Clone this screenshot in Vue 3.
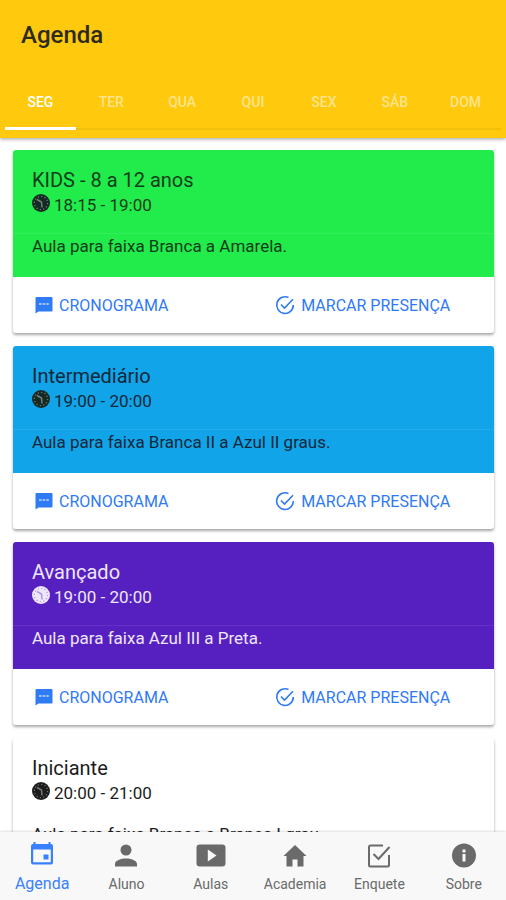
<script setup>
import {ref} from "vue";

const days=["SEG","TER","QUA","QUI","SEX","SÁB","DOM"];
const activeDay=ref("SEG");
const activeTab=ref("agenda");

const classes=[
  {name:"KIDS - 8 a 12 anos",time:"18:15 - 19:00",info:"Aula para faixa Branca a Amarela.",theme:"green"},
  {name:"Intermediário",time:"19:00 - 20:00",info:"Aula para faixa Branca II a Azul II graus.",theme:"blue"},
  {name:"Avançado",time:"19:00 - 20:00",info:"Aula para faixa Azul III a Preta.",theme:"purple"},
  {name:"Iniciante",time:"20:00 - 21:00",info:"Aula para faixa Branca a Branca I grau.",theme:"white"}
];

const tabs=[
  {id:"agenda",label:"Agenda"},
  {id:"aluno",label:"Aluno"},
  {id:"aulas",label:"Aulas"},
  {id:"academia",label:"Academia"},
  {id:"enquete",label:"Enquete"},
  {id:"sobre",label:"Sobre"}
];
</script>

<template>
  <div class="app">
    <header class="header">
      <h1>Agenda</h1>
      <nav class="days">
        <button v-for="day in days" :key="day" class="day" :class="{active:day===activeDay}" @click="activeDay=day">{{day}}</button>
      </nav>
    </header>

    <main class="content">
      <article v-for="item in classes" :key="item.name" class="card">
        <div class="card-top" :class="item.theme">
          <div class="card-head">
            <h2>{{item.name}}</h2>
            <p class="time">
              <svg class="clock" viewBox="0 0 18 18">
                <circle cx="9" cy="9" r="9" fill="currentColor"/>
                <circle class="clock-ticks" cx="9" cy="9" r="6.6" fill="none" stroke-width="1.2" stroke-dasharray="1.2 2.25"/>
                <path class="clock-hands" d="M5 5.500 9.500 8 10 13.500" fill="none" stroke-width="1.500"/>
              </svg>
              <span>{{item.time}}</span>
            </p>
          </div>
          <p class="info">{{item.info}}</p>
        </div>
        <div class="actions">
          <button class="action">
            <svg class="icon-chat" viewBox="0 0 18 18">
              <path fill="currentColor" d="M1.500 1h15q1 0 1 1v12.500q0 1-1 1H3.500L.5 17.500V2Q.5 1 1.500 1z"/>
              <path stroke="#fff" stroke-opacity=".7" stroke-width="1.600" stroke-dasharray="2.600 1" d="M4 8h10"/>
            </svg>
            <span>CRONOGRAMA</span>
          </button>
          <button class="action">
            <svg class="icon-done" viewBox="0 0 20 20" fill="none" stroke="currentColor" stroke-width="1.600">
              <path d="M13.500 2.600A8.300 8.300 0 1 0 18.300 10"/>
              <path d="M6 9.500 9.500 13 18 4.200"/>
            </svg>
            <span>MARCAR PRESENÇA</span>
          </button>
        </div>
      </article>
    </main>

    <nav class="tabbar">
      <button v-for="tab in tabs" :key="tab.id" class="tab" :class="{active:tab.id===activeTab}" @click="activeTab=tab.id">
        <svg class="tab-icon" viewBox="0 0 32 26" fill="currentColor">
          <path v-if="tab.id==='agenda'" fill-rule="evenodd" d="M7.500 0h2v2h13V0h2v2h.500Q27 2 27 4v16.500q0 2-2 2H7q-2 0-2-2V4Q5 2 7 2h.500zM7.200 7.500v12.800h17.600V7.500zM17.500 12.500H22.500v5H17.500z"/>
          <path v-else-if="tab.id==='aluno'" d="M16 2.500a5.500 5.500 0 1 1 0 11 5.500 5.500 0 0 1 0-11zM5 24.500v-2.500c0-3.600 6-5.500 11-5.500s11 1.900 11 5.500v2.500z"/>
          <path v-else-if="tab.id==='aulas'" fill-rule="evenodd" d="M4.800 2.500h22.400Q30.500 2.500 30.500 5.800v15.400q0 3.300-3.300 3.300H4.800Q1.500 24.500 1.500 21.200V5.800Q1.500 2.500 4.800 2.500zM12.800 7.500v12L21.500 13.500z"/>
          <path v-else-if="tab.id==='academia'" d="M16 3 27.500 14H24.500v10.500h-6v-7h-5v7H7.500V14H4.500z"/>
          <g v-else-if="tab.id==='enquete'" fill="none" stroke="currentColor" stroke-width="2">
            <path d="M20 3.500H7.500Q6 3.500 6 5v18q0 1.500 1.500 1.500h17q1.500 0 1.500-1.500V13"/>
            <path d="M10.500 12 15.500 17 26.500 5"/>
          </g>
          <path v-else fill-rule="evenodd" d="M16 1.500a12 12 0 1 1 0 24 12 12 0 0 1 0-24zM14.500 7.500v3h3v-3zM14.500 12v7.500h3v-7.500z"/>
        </svg>
        <span>{{tab.label}}</span>
      </button>
    </nav>
  </div>
</template>

<style>
body {
  margin: 0;
  background: #fff;
}
</style>

<style scoped>
.app {
  display: flex;
  flex-direction: column;
  height: 100vh;
  font-family: Roboto, "Liberation Sans", sans-serif;
  color: #1c1c1c;
}
h1, h2, p {
  margin: 0;
}
button {
  padding: 0;
  border: none;
  background: none;
  font-family: inherit;
  cursor: pointer;
}
.header {
  position: relative;
  z-index: 1;
  flex: none;
  padding: 20px 5px 8px;
  background: #ffc90e;
  box-shadow: 0 1px 4px rgba(0, 0, 0, 0.4);
}
h1 {
  padding: 0 16px;
  font-size: 24px;
  line-height: 30px;
  font-weight: 500;
  color: #2c2b1c;
}
.days {
  display: flex;
  margin-top: 24px;
  border-bottom: 2px solid #f2bf0d;
}
.day {
  flex: 1;
  height: 56px;
  margin-bottom: -2px;
  padding-top: 2px;
  border-bottom: 3px solid transparent;
  font-size: 14px;
  font-weight: 500;
  color: #ffe48a;
}
.day.active {
  border-bottom-color: #fff;
  color: #fff;
}
.content {
  display: flex;
  flex: 1;
  flex-direction: column;
  gap: 13px;
  min-height: 0;
  padding: 12px 12px 12px 13px;
  overflow-y: auto;
  scrollbar-width: none;
}
.card {
  flex: none;
  border-radius: 3px;
  overflow: hidden;
  background: #fff;
  box-shadow: 0 2px 3px rgba(0, 0, 0, 0.35);
}
.card-head {
  padding: 18px 19px 15px;
  border-bottom: 1px solid rgba(255, 255, 255, 0.08);
}
h2 {
  font-size: 20px;
  line-height: 24px;
  font-weight: 400;
}
.time {
  display: flex;
  align-items: center;
  gap: 4px;
  font-size: 17px;
  line-height: 26px;
}
.clock {
  width: 18px;
  height: 18px;
  margin-bottom: 4px;
}
.clock-ticks, .clock-hands {
  stroke: #fff;
  stroke-opacity: 0.4;
}
.info {
  padding: 0 19px 19px;
  font-size: 17px;
  line-height: 24px;
}
.green {
  background: #22ec4c;
  color: #123d1a;
}
.blue {
  background: #12a4e8;
  color: #10283a;
}
.purple {
  background: #5620c0;
  color: #eee6fb;
}
.green .clock, .blue .clock {
  color: #162a24;
}
.purple .clock-ticks, .purple .clock-hands {
  stroke: #5620c0;
}
.actions {
  display: grid;
  grid-template-columns: 1fr 1fr;
  padding: 0 22px;
}
.action {
  display: flex;
  align-items: center;
  gap: 6px;
  height: 56px;
  font-size: 16px;
  font-weight: 400;
  color: #2f7af5;
}
.action:last-child {
  justify-content: center;
}
.icon-chat {
  width: 18px;
  height: 18px;
}
.icon-done {
  width: 20px;
  height: 20px;
}
.tabbar {
  position: relative;
  z-index: 1;
  display: flex;
  flex: none;
  height: 68px;
  background: #f8f8f8;
  box-shadow: 0 -1px 2px rgba(0, 0, 0, 0.12);
}
.tab {
  display: flex;
  flex: 1;
  flex-direction: column;
  align-items: center;
  padding-top: 10px;
  font-size: 14px;
  line-height: 20px;
  color: #6a6a6a;
}
.tab-icon {
  width: 32px;
  height: 26px;
  margin-bottom: 6px;
}
.tab.active {
  font-size: 16px;
  color: #3880ff;
}
</style>
